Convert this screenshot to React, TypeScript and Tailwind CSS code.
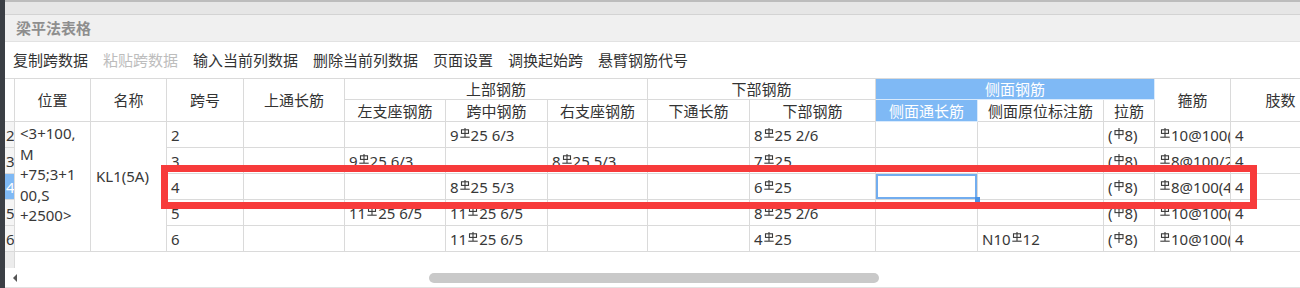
import React from "react";

const FONT = { fontFamily: '"Noto Sans", "Noto Sans CJK SC", sans-serif' };

function Hrb() {
  return (
    <svg viewBox="0 0 10 10" className="inline-block w-[10px] h-[10px] mx-[1px] align-[3px]" fill="none" stroke="#3a3a3a" strokeWidth="1.1">
      <rect x="1.5" y="1.8" width="7" height="3.6" />
      <line x1="5" y1="0" x2="5" y2="9" />
      <line x1="0.3" y1="9.2" x2="9.7" y2="9.2" />
    </svg>
  );
}

function Hpb() {
  return (
    <svg viewBox="0 0 10 11" className="inline-block w-[10px] h-[11px] mx-[1px] align-[2px]" fill="none" stroke="#3a3a3a" strokeWidth="1.1">
      <rect x="1" y="2.6" width="8" height="4" />
      <line x1="5" y1="0" x2="5" y2="11" />
    </svg>
  );
}

function Rebar({ text }: { text: string }) {
  const parts: React.ReactNode[] = [];
  let buf = "";
  [...text].forEach((c, i) => {
    if (c === "#" || c === "%") {
      if (buf) parts.push(buf);
      buf = "";
      parts.push(c === "#" ? <Hrb key={i} /> : <Hpb key={i} />);
    } else buf += c;
  });
  if (buf) parts.push(buf);
  return <span className="whitespace-pre">{parts}</span>;
}

const rows = [
  { n: "2", c: ["2", "", "", "9#25 6/3", "", "", "8#25 2/6", "", "", "(%8)", "#10@100(4)", "4"] },
  { n: "3", c: ["3", "", "9#25 6/3", "", "8#25 5/3", "", "7#25", "", "", "(%8)", "#8@100/200(4)", "4"] },
  { n: "4", c: ["4", "", "", "8#25 5/3", "", "", "6#25", "", "", "(%8)", "#8@100(4)", "4"], sel: true },
  { n: "5", c: ["5", "", "11#25 6/5", "11#25 6/5", "", "", "8#25 2/6", "", "", "(%8)", "#10@100(4)", "4"] },
  { n: "6", c: ["6", "", "", "11#25 6/5", "", "", "4#25", "", "N10#12", "(%8)", "#10@100(4)", "4"] },
];

const hc = "border-r border-b border-[#dadada] flex items-center justify-center whitespace-nowrap overflow-hidden text-[#333]";
const hb = "border-r border-b border-white/70 bg-[#7fb9f5] flex items-center justify-center whitespace-nowrap overflow-hidden text-white";
const dc = "border-r border-b border-[#dadada] flex items-center pl-[4px] whitespace-nowrap overflow-hidden text-[#383838]";

export default function App() {
  return (
    <div className="relative w-[1300px] h-[288px] flex bg-white overflow-hidden text-[15px] leading-[20px]" style={FONT}>
      <div className="w-[5px] shrink-0 bg-[#3b3f45]" />
      <div className="flex-1 flex flex-col min-w-0">
        <div className="h-[15px] shrink-0 bg-[#e6e6e6] border-t-[2px] border-t-[#bcbcbc] border-b border-b-[#d3d3d3]" />
        <div className="h-[27px] shrink-0 bg-[#f0f0f0] border-b border-[#e2e2e2] flex items-center pl-[11px] font-bold text-[#8e8e8e]">
          梁平法表格
        </div>
        <div className="h-[36px] shrink-0 flex items-center gap-[15px] pl-[8px] text-[#333]">
          <span>复制跨数据</span>
          <span className="text-[#bdbdbd]">粘贴跨数据</span>
          <span>输入当前列数据</span>
          <span>删除当前列数据</span>
          <span>页面设置</span>
          <span>调换起始跨</span>
          <span>悬臂钢筋代号</span>
        </div>
        <div className="grid shrink-0 w-[1326px] border-t border-[#dadada] grid-cols-[10px_76px_76px_77px_101px_101px_102px_100px_102px_126px_102px_126px_51px_76px_100px] grid-rows-[21px_22px_26px_26px_26px_26px_26px]">
          <div className={`${hc} row-span-2`} />
          <div className={`${hc} row-span-2`}>位置</div>
          <div className={`${hc} row-span-2`}>名称</div>
          <div className={`${hc} row-span-2`}>跨号</div>
          <div className={`${hc} row-span-2`}>上通长筋</div>
          <div className={`${hc} col-span-3`}>上部钢筋</div>
          <div className={`${hc} col-span-2`}>下部钢筋</div>
          <div className={`${hb} col-span-3`}>侧面钢筋</div>
          <div className={`${hc} row-span-2`}>箍筋</div>
          <div className={`${hc} row-span-2`}>肢数</div>
          <div className={hc}>左支座钢筋</div>
          <div className={hc}>跨中钢筋</div>
          <div className={hc}>右支座钢筋</div>
          <div className={hc}>下通长筋</div>
          <div className={hc}>下部钢筋</div>
          <div className={hb}>侧面通长筋</div>
          <div className={hc}>侧面原位标注筋</div>
          <div className={hc}>拉筋</div>
          {rows.map((r, ri) => (
            <React.Fragment key={r.n}>
              <div
                className={`border-r border-b border-[#dadada] overflow-hidden flex items-center pl-[1px] ${
                  r.sel ? "bg-[#7fb9f5] text-white" : "bg-[#f5f5f5] text-[#383838]"
                }`}
              >
                {r.n}
              </div>
              {ri === 0 && (
                <>
                  <div className="row-span-5 border-r border-b border-[#dadada] pl-[5px] pt-[1px] text-[#383838] leading-[20.6px]">
                    &lt;3+100,
                    <br />M
                    <br />
                    +75;3+1
                    <br />
                    00,S
                    <br />
                    +2500&gt;
                  </div>
                  <div className="row-span-5 border-r border-b border-[#dadada] pl-[5px] pt-[44px] text-[#383838]">
                    KL1(5A)
                  </div>
                </>
              )}
              {r.c.map((v, ci) =>
                r.sel && ci === 7 ? (
                  <div key={ci} className={`${dc} relative overflow-visible shadow-[inset_0_0_0_2px_#72adef]`}>
                    <div className="absolute right-[-3px] bottom-[-3px] w-[5px] h-[5px] bg-[#4a93e6] z-10" />
                  </div>
                ) : (
                  <div key={ci} className={dc}>
                    <Rebar text={v} />
                  </div>
                )
              )}
            </React.Fragment>
          ))}
        </div>
        <div className="h-[16px] shrink-0 flex">
          <div className="w-[10px] bg-[#ececec] border-r border-[#dadada]" />
        </div>
        <div className="h-[20px] shrink-0 flex items-center border-b border-[#e2e2e2]">
          <div className="ml-[8px] w-0 h-0 border-y-[4px] border-y-transparent border-r-[4px] border-r-[#555]" />
          <div className="ml-[412px] w-[450px] h-[10px] rounded-full bg-[#c9c9c9]" />
        </div>
      </div>
      <div className="absolute left-[161px] top-[165px] w-[1096px] h-[44px] border-[7px] border-[#f73b3b] pointer-events-none" />
    </div>
  );
}
